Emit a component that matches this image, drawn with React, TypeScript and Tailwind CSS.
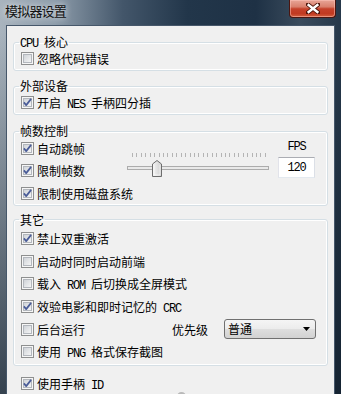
import React from 'react';

// Case à cocher façon Windows 7
const CheckBox: React.FC<{ checked: boolean }> = ({ checked }) => (
  <svg width="13" height="13" viewBox="0 0 13 13" className="shrink-0">
    <defs>
      <linearGradient id="cb-fill" x1="0" y1="0" x2="1" y2="1">
        <stop offset="0" stopColor="#cdd1d6" />
        <stop offset="1" stopColor="#f7f7f7" />
      </linearGradient>
    </defs>
    <rect x="0.5" y="0.5" width="12" height="12" fill="#f6f6f6" stroke="#8e8f8f" />
    <rect x="2.5" y="2.5" width="8" height="8" fill="url(#cb-fill)" stroke="#b3b7bd" />
    {checked && (
      <path d="M2.9 6.4 L5.2 9.1 L10.1 2.9" fill="none" stroke="#4a5c98" strokeWidth="1.7" strokeLinejoin="round" />
    )}
  </svg>
);

// Texte latin à chasse fixe (comme SimSun)
const Mono: React.FC<{ children: React.ReactNode }> = ({ children }) => (
  <span className="whitespace-pre font-['Liberation_Mono',monospace] text-[12px] leading-[0] tracking-[-1.2px]">{children}</span>
);

const Check: React.FC<{ checked?: boolean; children: React.ReactNode }> = ({ checked = false, children }) => (
  <div className="flex h-[13px] items-center gap-[3px]">
    <CheckBox checked={checked} />
    <span className="whitespace-pre leading-[13px]">{children}</span>
  </div>
);

const Group: React.FC<{ title: React.ReactNode; className?: string; children: React.ReactNode }> = ({
  title,
  className = '',
  children
}) => (
  <fieldset className={`mx-[6px] rounded-[3px] border border-[#d5dfe5] px-[7px] shadow-[inset_0_0_0_1px_#ffffff] ${className}`}>
    <legend className="-ml-[2px] h-[12px] px-[1px] text-[12px] leading-[12px] whitespace-pre">{title}</legend>
    {children}
  </fieldset>
);

// Graduations du curseur
const ticks = Array.from({ length: 31 }, (_, i) => 5 + Math.round(i * 4.43));

const Slider = () => (
  <svg width="142" height="25" viewBox="0 0 142 25" className="mt-[11.5px] shrink-0">
    <defs>
      <linearGradient id="thumb" x1="0" y1="0" x2="1" y2="0">
        <stop offset="0" stopColor="#f4f4f4" />
        <stop offset="0.5" stopColor="#e2e2e2" />
        <stop offset="1" stopColor="#cfcfcf" />
      </linearGradient>
    </defs>
    {ticks.map((x) => (
      <line key={x} x1={x + 0.5} y1="0" x2={x + 0.5} y2="4" stroke="#b4b4b4" />
    ))}
    <rect x="0.5" y="13.5" width="141" height="3" fill="#e9e9e9" stroke="#acacac" />
    <path d="M25.5 11 L30 7.5 L34.5 11 V23.5 H25.5 Z" fill="url(#thumb)" stroke="#6d6d6d" strokeLinejoin="round" />
    <path d="M27 12 V22 H33 V12" fill="none" stroke="#ffffff" strokeOpacity="0.6" />
  </svg>
);

export default function App() {
  return (
    <div className="flex h-[394px] w-[341px] flex-col overflow-hidden bg-[linear-gradient(180deg,rgba(15,28,42,0)_0%,rgba(15,28,42,0)_8%,rgba(15,28,42,0.75)_100%),linear-gradient(90deg,#a9b4be_0%,#8e9dab_16%,#43566a_36%,#22364a_55%,#1e3145_75%,#3a4b5c_88%,#26384a_100%)] font-['Noto_Sans_CJK_SC',sans-serif] text-[12px] text-black">
      {/* Barre de titre */}
      <div className="flex h-[25px] shrink-0 items-start justify-between">
        <span className="pl-[5px] pt-[3px] text-[13px] leading-[16px] tracking-[-0.8px] text-[#111] [text-shadow:0_0_6px_rgba(255,255,255,0.9)]">
          模拟器设置
        </span>
        <div className="mr-[5px] flex h-[18px] w-[47px] items-center justify-center rounded-b-[4px] border border-t-0 border-[#4a1510] bg-[linear-gradient(180deg,#e8a597_0%,#d9806d_40%,#c5412a_52%,#c13a22_80%,#d3603f_100%)] shadow-[inset_0_0_0_1px_rgba(255,200,190,0.5)]">
          <svg width="14" height="11" viewBox="0 0 14 11">
            <path d="M2 1.5 L12 9.5 M12 1.5 L2 9.5" stroke="#4a1208" strokeWidth="4.2" strokeLinecap="square" />
            <path d="M2.6 2 L11.4 9 M11.4 2 L2.6 9" stroke="#ffffff" strokeWidth="2.4" strokeLinecap="square" />
          </svg>
        </div>
      </div>

      {/* Zone cliente */}
      <div className="mx-[6px] flex-1 border border-b-0 border-[#46576a] bg-[#f0f0f0]">
        <Group title={<><Mono>CPU </Mono>核心</>} className="mt-[10px] pb-[5px]">
          <div className="pt-[4px]">
            <Check>忽略代码错误</Check>
          </div>
        </Group>

        <Group title="外部设备" className="mt-[9px] pb-[5px]">
          <div className="pt-[4px]">
            <Check checked>
              开启<Mono> NES </Mono>手柄四分插
            </Check>
          </div>
        </Group>

        <Group title="帧数控制" className="mt-[10px] pb-[5px]">
          <div className="flex pt-[4.5px]">
            <div className="flex w-[106px] shrink-0 flex-col gap-[9.7px]">
              <Check checked>自动跳帧</Check>
              <Check checked>限制帧数</Check>
              <Check checked>限制使用磁盘系统</Check>
            </div>
            <Slider />
            <div className="ml-[9px] flex w-[37px] shrink-0 flex-col items-center">
              <span className="-mt-[0.5px] font-['Liberation_Mono',monospace] text-[12px] leading-[12px] tracking-[-1.2px]">
                FPS
              </span>
              <div className="mt-[4px] flex h-[21px] w-[37px] items-center justify-center border border-[#abadb3] border-b-[#e3e9ef] border-l-[#e2e3ea] border-r-[#dbdfe6] bg-white font-['Liberation_Mono',monospace] text-[12px] tracking-[-1.2px]">
                120
              </div>
            </div>
          </div>
        </Group>

        <Group title="其它" className="mt-[8px] pb-[6.5px]">
          <div className="flex flex-col gap-[9.7px] pt-[6px]">
            <Check checked>禁止双重激活</Check>
            <Check>启动时同时启动前端</Check>
            <Check>
              载入<Mono> ROM </Mono>后切换成全屏模式
            </Check>
            <Check checked>
              效验电影和即时记忆的<Mono> CRC</Mono>
            </Check>
            <div className="flex h-[13px] items-center">
              <div className="w-[151px] shrink-0">
                <Check>后台运行</Check>
              </div>
              <span className="leading-[13px]">优先级</span>
              <div className="ml-[16px] flex h-[20px] w-[92px] shrink-0 items-center justify-between rounded-[3px] border border-[#707070] bg-[linear-gradient(180deg,#f5f5f5_0%,#ececec_48%,#dedede_52%,#d2d2d2_100%)] pl-[3px] pr-[5px]">
                <span className="leading-[14px]">普通</span>
                <svg width="7" height="4" viewBox="0 0 7 4">
                  <path d="M0 0 H7 L3.5 4 Z" fill="#000" />
                </svg>
              </div>
            </div>
            <Check>
              使用<Mono> PNG </Mono>格式保存截图
            </Check>
          </div>
        </Group>

        <div className="mx-[6px] mt-[11px] pl-[8px]">
          <Check checked>
            使用手柄<Mono> ID</Mono>
          </Check>
        </div>
        <div className="ml-[170px] mt-[2px] h-[6px] w-[9px] rounded-t-full bg-[#b9b9b9]" />
      </div>
    </div>
  );
}
